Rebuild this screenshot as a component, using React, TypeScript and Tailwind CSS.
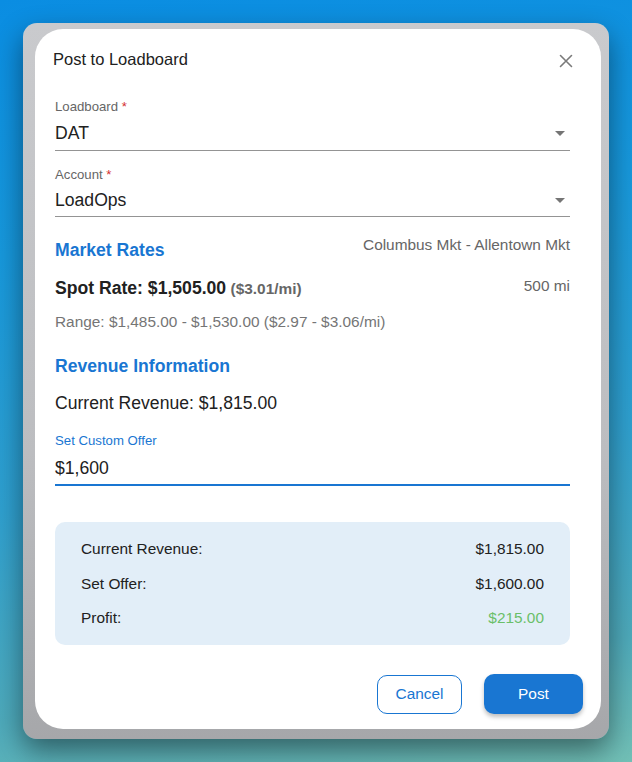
import React from "react";

function Caret() {
  return (
    <svg width="24" height="24" viewBox="0 0 24 24" className="shrink-0">
      <path d="M7 10l5 5 5-5z" fill="#757575" />
    </svg>
  );
}

function SelectField({
  label,
  value,
  mt,
  labelGap,
  pb,
}: {
  label: string;
  value: string;
  mt: string;
  labelGap: string;
  pb: string;
}) {
  return (
    <div className={mt}>
      <div className="text-[13.2px] leading-[16px] text-[#666666]">
        {label}
        <span className="text-[#d32f2f]"> *</span>
      </div>
      <div className={`${labelGap} ${pb} flex items-center justify-between border-b border-[#949494]`}>
        <span className="text-[17.6px] leading-[24px] text-[#212121]">{value}</span>
        <span className="-mr-[2px]">
          <Caret />
        </span>
      </div>
    </div>
  );
}

function Row({ label, value, valueClass }: { label: string; value: string; valueClass?: string }) {
  return (
    <div className="flex items-center justify-between text-[15.4px] leading-[20px]">
      <span className="text-[#212121]">{label}</span>
      <span className={valueClass ?? "text-[#212121]"}>{value}</span>
    </div>
  );
}

export default function App() {
  return (
    <div
      className="w-[632px] h-[762px] overflow-hidden pt-[23px] pl-[23px] bg-[linear-gradient(172deg,#0a8de2_0%,#1798dc_30%,#2fa0cf_60%,#4eaabb_85%,#72c0b6_100%)]"
      style={{ fontFamily: '"Liberation Sans", Arial, Helvetica, sans-serif' }}
    >
      <div className="w-[586px] h-[716px] rounded-[14px] pl-[12px] pt-[6px] bg-[linear-gradient(180deg,#c9cacd_0%,#bcbdc0_60%,#a6a7aa_100%)] shadow-[0_12px_28px_rgba(0,0,0,0.45)]">
        <div className="w-[566px] h-[700px] rounded-[28px] bg-white flex flex-col">
          {/* Header */}
          <div className="pt-[18px] pl-[18px] pr-[28px] flex items-start justify-between">
            <h2 className="text-[16.5px] leading-[24px] text-[#212121]">Post to Loadboard</h2>
            <svg width="14" height="14" viewBox="0 0 14 14" className="mt-[7px]">
              <path d="M1.5 1.5L12.5 12.5M12.5 1.5L1.5 12.5" stroke="#7a7a7a" strokeWidth="1.6" strokeLinecap="round" />
            </svg>
          </div>

          <div className="pl-5 pr-[31px] flex flex-col">
            <SelectField label="Loadboard" value="DAT" mt="mt-[28px]" labelGap="mt-[6px]" pb="pb-[5px]" />
            <SelectField label="Account" value="LoadOps" mt="mt-[16px]" labelGap="mt-[5px]" pb="pb-[4px]" />

            {/* Market Rates */}
            <div className="mt-[18px] flex items-start justify-between">
              <h3 className="mt-[3px] text-[17.6px] leading-[24px] font-bold text-[#1976d2]">Market Rates</h3>
              <span className="text-[15.4px] leading-[20px] text-[#666666]">Columbus Mkt - Allentown Mkt</span>
            </div>

            <div className="mt-[14px] flex items-start justify-between">
              <div className="leading-[24px] text-[#212121]">
                <span className="text-[17.6px] font-bold">Spot Rate: $1,505.00</span>{" "}
                <span className="text-[15.4px] font-bold text-[#666666]">($3.01/mi)</span>
              </div>
              <span className="text-[15.4px] leading-[20px] text-[#666666]">500 mi</span>
            </div>

            <div className="mt-[11px] text-[15.4px] leading-[20px] text-[#757575]">
              Range: $1,485.00 - $1,530.00 ($2.97 - $3.06/mi)
            </div>

            {/* Revenue */}
            <h3 className="mt-[22px] text-[17.6px] leading-[24px] font-bold text-[#1976d2]">Revenue Information</h3>
            <div className="mt-[13px] text-[17.6px] leading-[24px] text-[#212121]">Current Revenue: $1,815.00</div>

            <div className="mt-[18px]">
              <div className="text-[13.2px] leading-[16px] text-[#1976d2]">Set Custom Offer</div>
              <div className="mt-[7px] pb-[4px] border-b-2 border-[#1976d2] text-[17.6px] leading-[24px] text-[#212121]">
                $1,600
              </div>
            </div>

            {/* Summary */}
            <div className="mt-[36px] rounded-[10px] bg-[#e2eef8] px-[26px] pt-[17px] pb-[17px] flex flex-col gap-[14.5px]">
              <Row label="Current Revenue:" value="$1,815.00" />
              <Row label="Set Offer:" value="$1,600.00" />
              <Row label="Profit:" value="$215.00" valueClass="text-[#6abf69]" />
            </div>
          </div>

          {/* Actions */}
          <div className="mt-[29px] pr-[18px] flex items-center justify-end gap-[22px]">
            <button className="w-[85px] h-[39px] rounded-[10px] border border-[#1976d2] text-[15.4px] text-[#1976d2] bg-white">
              Cancel
            </button>
            <button className="w-[99px] h-[40px] rounded-[10px] bg-[#1976d2] text-[15.4px] font-medium text-white shadow-[0_3px_4px_rgba(0,0,0,0.25)]">
              Post
            </button>
          </div>
        </div>
      </div>
    </div>
  );
}
